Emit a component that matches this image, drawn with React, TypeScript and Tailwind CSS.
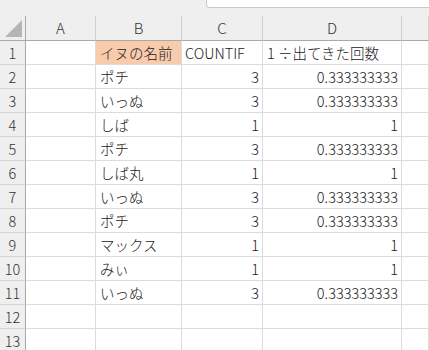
const rows: [string, string, string][] = [
  ["ポチ", "3", "0.333333333"],
  ["いっぬ", "3", "0.333333333"],
  ["しば", "1", "1"],
  ["ポチ", "3", "0.333333333"],
  ["しば丸", "1", "1"],
  ["いっぬ", "3", "0.333333333"],
  ["ポチ", "3", "0.333333333"],
  ["マックス", "1", "1"],
  ["みぃ", "1", "1"],
  ["いっぬ", "3", "0.333333333"],
  ["", "", ""],
  ["", "", ""],
]

const cols = "grid grid-cols-[26px_70px_86px_81px_139px_1fr]"
const cell = "h-[24px] border-r border-b border-[#dcdcdc] flex items-center overflow-hidden whitespace-nowrap"
const rowHead =
  "h-[24px] border-r border-b border-r-[#a8a8a8] border-b-[#d2d2d2] bg-[#efefef] flex items-center justify-center text-[#333]"

export default function App() {
  return (
    <div
      className="w-[429px] h-[350px] overflow-hidden bg-white text-[14.5px] font-light text-[#222]"
      style={{ fontFamily: '"Noto Sans CJK JP", "Noto Sans", sans-serif' }}
    >
      {/* top strip */}
      <div className="flex h-[16px] bg-[#efefef]">
        <div className="w-[206px]" />
        <div className="flex-1 h-[8px] bg-white border-b border-l border-[#c8c8c8] rounded-bl-[4px]" />
      </div>

      {/* column headers */}
      <div className={cols + " bg-[#efefef] text-[15px] text-[#333]"}>
        <div className="h-[25px] border-r border-b border-[#a8a8a8] flex items-end justify-end pr-[3px] pb-[3px]">
          <svg width="17" height="17" viewBox="0 0 17 17">
            <polygon points="17,0 17,17 0,17" fill="#b5b5b5" />
          </svg>
        </div>
        {["A", "B", "C", "D", ""].map((c, i) => (
          <div
            key={i}
            className="h-[25px] border-r border-b border-r-[#d0d0d0] border-b-[#a8a8a8] flex items-center justify-center"
          >
            {c}
          </div>
        ))}
      </div>

      {/* row 1 */}
      <div className={cols}>
        <div className={rowHead}>1</div>
        <div className={cell} />
        <div className={cell + " bg-[#f8cbad] pl-[4px]"}>イヌの名前</div>
        <div className={cell + " pl-[3px]"}>COUNTIF</div>
        <div className={cell + " pl-[4px]"}>1 ÷出てきた回数</div>
        <div className={cell} />
      </div>

      {rows.map((r, i) => (
        <div key={i} className={cols}>
          <div className={rowHead}>{i + 2}</div>
          <div className={cell} />
          <div className={cell + " pl-[4px]"}>{r[0]}</div>
          <div className={cell + " justify-end pr-[3px]"}>{r[1]}</div>
          <div className={cell + " justify-end pr-[3px]"}>{r[2]}</div>
          <div className={cell} />
        </div>
      ))}
    </div>
  )
}
